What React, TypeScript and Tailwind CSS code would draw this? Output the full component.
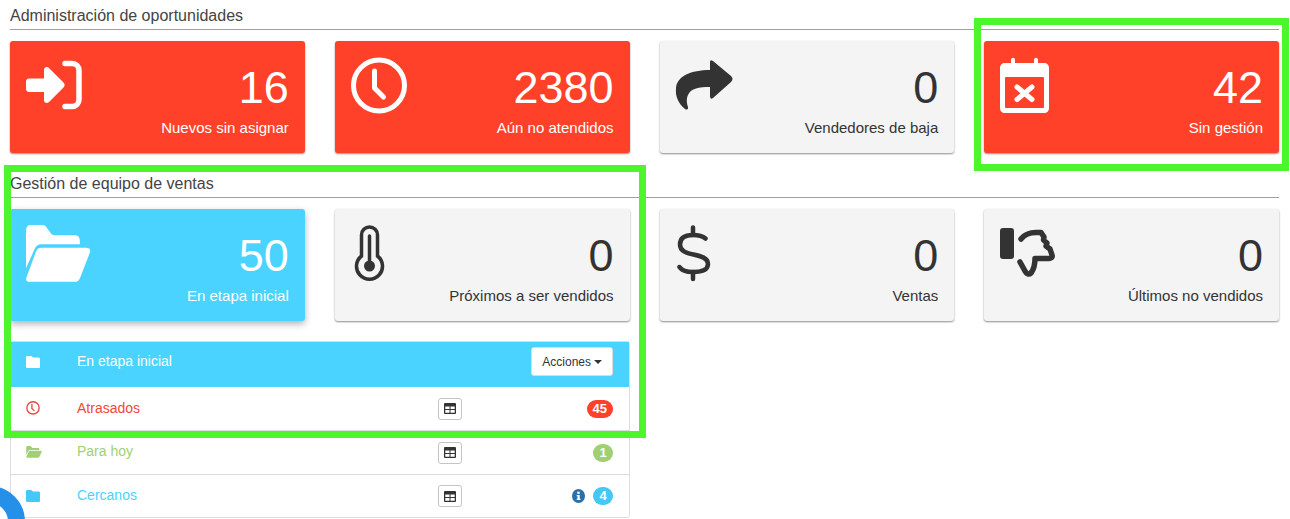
import React from "react";

const font = "font-['Liberation_Sans',Arial,sans-serif]";

function SignIn({ c }: { c: string }) {
  return (
    <svg width="66" height="58" viewBox="0 0 66 58" fill="none">
      <path d="M4 21.500H19V13C19 10 22 9 24 11L38.500 25.500C40 27 40 29 38.500 30.500L24 45C22 47 19 46 19 43V35H4C2 35 1 33.500 1 32V24.500C1 23 2 21.500 4 21.500Z" fill={c} />
      <path d="M40 6.500H47C51 6.500 54 9.500 54 13.500V42.500C54 46.500 51 49.500 47 49.500H40" stroke={c} strokeWidth="5.500" strokeLinecap="round" />
    </svg>
  );
}
function Clock({ c, size = 58, sw = 5 }: { c: string; size?: number; sw?: number }) {
  return (
    <svg width={size} height={size} viewBox="0 0 58 58" fill="none" stroke={c} strokeWidth={sw} strokeLinecap="round" strokeLinejoin="round">
      <circle cx="29" cy="28.500" r="25.500" />
      <path d="M24.500 14V31L33.500 40" />
    </svg>
  );
}
function Share({ c }: { c: string }) {
  return (
    <svg width="66" height="58" viewBox="0 0 66 58" fill={c}>
      <path d="M35 5Q35 2 38 4L56 19Q59 22 56 25L38 41Q35 43 35 39V30C24 30 16 31 13 38C11 42 12 47 13 50C13.500 53 11 53 10 52C4 47 0 40 1 31C2 19 16 13 35 13Z" />
    </svg>
  );
}
function CalendarX({ c }: { c: string }) {
  return (
    <svg width="66" height="58" viewBox="0 0 66 58" fill="none">
      <path d="M12 6V3C12 0 16 0 16 3V6H35V3C35 0 39 0 39 3V6H45C48 6 50 8 50 11V51C50 54 48 56 45 56H6C3 56 1 54 1 51V11C1 8 3 6 6 6Z" fill={c} />
      <rect x="6" y="20" width="39" height="31" rx="1" fill="#ff4129" />
      <path d="M18 30L33 42.500M33 30L18 42.500" stroke={c} strokeWidth="5" strokeLinecap="round" />
    </svg>
  );
}
function FolderOpen({ c, w = 66, h = 58 }: { c: string; w?: number; h?: number }) {
  return (
    <svg width={w} height={h} viewBox="0 3 65 51" fill={c} preserveAspectRatio="none">
      <path d="M1 8Q1 3 6 3H17Q20 3 22 6L26 11Q27 12 29 12H49Q54 12 54 17V20H16Q11 20 9 25L1 41Z" />
      <path d="M11 26Q12.500 23 16 23H60Q65 23 64 27L54 50Q52.500 53 49 53H5Q0 53 1.500 49Z" />
    </svg>
  );
}
function Thermo({ c }: { c: string }) {
  return (
    <svg width="66" height="58" viewBox="0 0 66 58" fill="none" stroke={c}>
      <path d="M11.500 31V10A8 8 0 0 1 27.500 10V31A13 13 0 1 1 11.500 31Z" strokeWidth="3.500" />
      <path d="M19.500 11V38" strokeWidth="3.500" strokeLinecap="round" />
      <circle cx="19.500" cy="41" r="5.500" fill={c} stroke="none" />
    </svg>
  );
}
function Dollar({ c }: { c: string }) {
  return (
    <svg width="66" height="58" viewBox="0 0 66 58" fill="none" stroke={c} strokeWidth="4.500" strokeLinecap="round" strokeLinejoin="round">
      <path d="M18 2.500V10M18 47V54" />
      <path d="M30.500 13.500C27 10.500 23 10 18 10C10 10 5 13 5 19.500C5 26 11 28 18.500 29.500C26 31 33 33 33 39C33 45 27 47 18 47C12 47 7 46 4.500 42" />
    </svg>
  );
}
function ThumbDown({ c }: { c: string }) {
  return (
    <svg width="66" height="58" viewBox="0 0 66 58" fill="none">
      <rect x="1" y="3" width="14" height="31" rx="3" fill={c} />
      <path d="M22 14C26 9 32 7.500 37 7.500H42L45 12L44.500 15L48 18L47 21L51 24L53 30Q54 33 50 33.500H36C36 40 35 44 32 48C30 50 27.500 49 26 46L21 37" stroke={c} strokeWidth="5.500" strokeLinecap="round" strokeLinejoin="round" />
    </svg>
  );
}

function Card({ icon, value, label, tone }: { icon: React.ReactNode; value: string; label: string; tone: "red" | "gray" | "blue" }) {
  const bg = tone === "red" ? "bg-[#ff4129] text-white" : tone === "blue" ? "bg-[#4bd3ff] text-white" : "bg-[#f4f4f4] text-[#333333]";
  const shadow = tone === "blue" ? "shadow-[0_3px_7px_rgba(0,0,0,0.3)]" : "shadow-[0_1px_2px_rgba(0,0,0,0.45)]";
  return (
    <div className={`h-[112px] rounded-[3px] ${bg} ${shadow} flex justify-between pl-[15px] pr-[16px]`}>
      <div className="pt-[16px]">{icon}</div>
      <div className="flex flex-col items-end">
        <div className="text-[45px] leading-[50px] mt-[22px]">{value}</div>
        <div className="text-[15px] leading-[20px] mt-[5px]">{label}</div>
      </div>
    </div>
  );
}

function TableIcon() {
  return (
    <div className="w-[24px] h-[22px] border border-[#c4c4c4] rounded-[3px] bg-white flex items-center justify-center">
      <svg width="12" height="11" viewBox="0 0 12 11">
        <path d="M1 0H11A1 1 0 0 1 12 1V10A1 1 0 0 1 11 11H1A1 1 0 0 1 0 10V1A1 1 0 0 1 1 0Z" fill="#333" />
        <path d="M1.300 3.500H5.500V6H1.300ZM6.500 3.500H10.700V6H6.500ZM1.300 7H5.500V9.700H1.300ZM6.500 7H10.700V9.700H6.500Z" fill="#fff" />
      </svg>
    </div>
  );
}

function SmallFolder({ c }: { c: string }) {
  return (
    <svg width="14" height="12" viewBox="0 0 14 14" fill={c} preserveAspectRatio="none">
      <path d="M0 1.500C0 .7.700 0 1.500 0H4.800C5.300 0 5.700.2 6 .6L6.800 1.700H12.500C13.300 1.700 14 2.400 14 3.200V12.500C14 13.300 13.300 14 12.500 14H1.500C.7 14 0 13.300 0 12.500Z" />
    </svg>
  );
}

function Row({ icon, label, color, badge, badgeBg, info, h, last, shift }: { icon: React.ReactNode; label: string; color: string; badge: string; badgeBg: string; info?: boolean; h: string; last?: boolean; shift: string }) {
  return (
    <div className={`flex items-center ${h} ${last ? "" : "border-b border-[#dddddd]"}`}>
      <div className={`w-[66px] pl-[15px] flex ${shift}`}>{icon}</div>
      <div className={`text-[14px] ${color} w-[361px] ${shift}`}>{label}</div>
      <TableIcon />
      <div className="flex-1 flex items-center justify-end gap-[8px] pr-[16px]">
        {info && (
          <svg width="13" height="14" viewBox="0 0 13 13" preserveAspectRatio="none">
            <circle cx="6.500" cy="6.500" r="6.500" fill="#2a6fa8" />
            <rect x="5.300" y="2.500" width="2.400" height="2" fill="#fff" />
            <path d="M4.700 5.500H7.700V9H8.500V10.300H4.700V9H5.500V6.800H4.700Z" fill="#fff" />
          </svg>
        )}
        <span className={`${badgeBg} text-white text-[13px] font-bold leading-[18px] h-[18px] min-w-[20px] px-[6px] rounded-full text-center`}>{badge}</span>
      </div>
    </div>
  );
}

function Section({ title, children }: { title: string; children: React.ReactNode }) {
  return (
    <div>
      <div className="text-[16px] leading-[20px] text-[#444444] h-[23px] pt-[6px] border-b border-[#a0a0a0] box-content -mb-px">{title}</div>
      {children}
    </div>
  );
}

export default function App() {
  return (
    <div className={`${font} relative w-[1290px] h-[519px] overflow-hidden bg-white`}>
      <div className="pl-[10px] pr-[11px]">
        <Section title="Administración de oportunidades">
          <div className="grid grid-cols-4 gap-x-[30px] mt-[12px]">
            <Card tone="red" icon={<SignIn c="#fff" />} value="16" label="Nuevos sin asignar" />
            <Card tone="red" icon={<Clock c="#fff" />} value="2380" label="Aún no atendidos" />
            <Card tone="gray" icon={<Share c="#333" />} value="0" label="Vendedores de baja" />
            <Card tone="red" icon={<CalendarX c="#fff" />} value="42" label="Sin gestión" />
          </div>
        </Section>
        <div className="mt-[15px]">
          <Section title="Gestión de equipo de ventas">
            <div className="grid grid-cols-4 gap-x-[30px] mt-[12px]">
              <Card tone="blue" icon={<FolderOpen c="#fff" />} value="50" label="En etapa inicial" />
              <Card tone="gray" icon={<Thermo c="#333" />} value="0" label="Próximos a ser vendidos" />
              <Card tone="gray" icon={<Dollar c="#333" />} value="0" label="Ventas" />
              <Card tone="gray" icon={<ThumbDown c="#333" />} value="0" label="Últimos no vendidos" />
            </div>
          </Section>
        </div>
        <div className="mt-[20px] w-[620px] border border-[#dddddd] rounded-[3px]">
          <div className="h-[45px] pb-[6px] bg-[#4bd3ff] flex items-center text-white">
            <div className="w-[66px] pl-[15px] flex"><SmallFolder c="#fff" /></div>
            <div className="text-[14px] flex-1">En etapa inicial</div>
            <div className="mr-[16px] h-[29px] px-[10px] bg-white rounded-[3px] border border-[#dddddd] text-[#333] text-[12px] flex items-center gap-[3px]">
              Acciones
              <span className="w-0 h-0 border-x-[4px] border-x-transparent border-t-[4px] border-t-[#333]" />
            </div>
          </div>
          <Row h="h-[44px]" shift="-mt-[1px]" icon={<Clock c="#e5483a" size={14} sw={5.500} />} label="Atrasados" color="text-[#f0483a]" badge="45" badgeBg="bg-[#ff4129]" />
          <Row h="h-[44px]" shift="-mt-[2px]" icon={<FolderOpen c="#a1d073" w={16} h={12} />} label="Para hoy" color="text-[#a1d073]" badge="1" badgeBg="bg-[#a1d073]" />
          <Row h="h-[42px]" shift="-mt-[1px]" last icon={<SmallFolder c="#45c8f5" />} label="Cercanos" color="text-[#4bd3ff]" badge="4" badgeBg="bg-[#45c8f5]" info />
        </div>
      </div>
      {/* annotation frames drawn over the page */}
      <div className="absolute left-[974px] top-[18px] w-[315px] h-[153px] border-[7px] border-[#4cf52c]" />
      <div className="absolute left-[4px] top-[165px] w-[642px] h-[273px] border-[7px] border-[#4cf52c]" />
      <div className="absolute left-[-46px] top-[486px] w-[71px] h-[71px] rounded-full border-[17px] border-[#2490e8] bg-white" />
    </div>
  );
}
